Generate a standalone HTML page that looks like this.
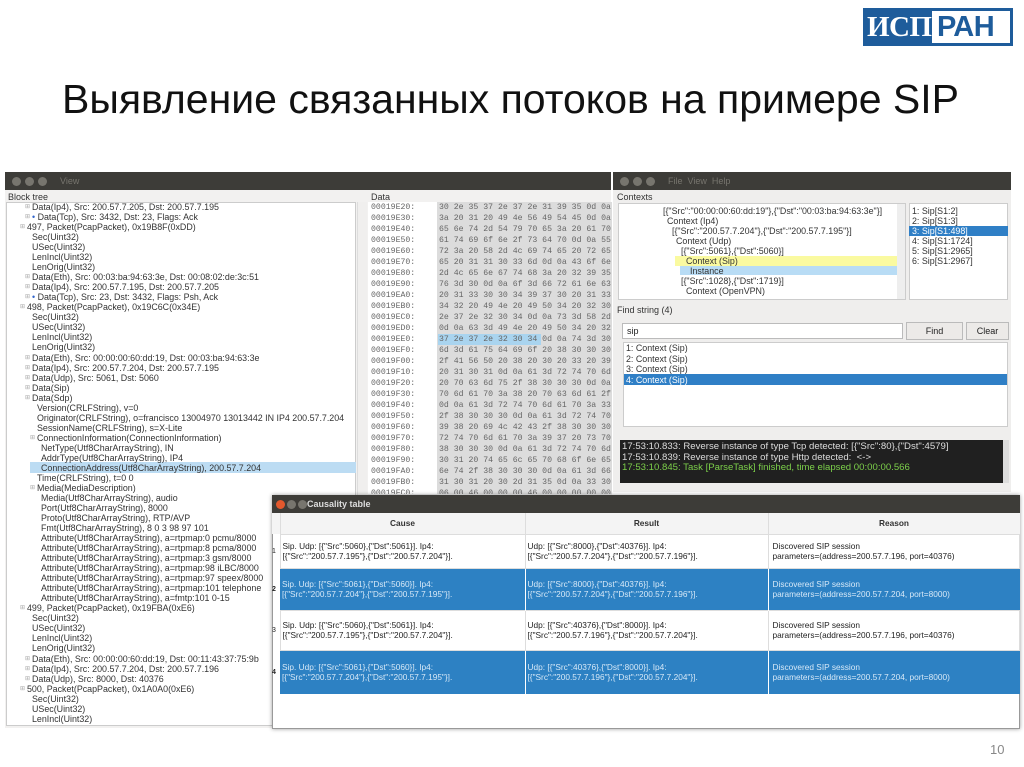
<!DOCTYPE html>
<html><head><meta charset="utf-8"><style>
*{margin:0;padding:0;box-sizing:border-box}
body{width:1024px;height:767px;background:#fff;position:relative;overflow:hidden;font-family:"Liberation Sans",sans-serif;color:#222}
.a{position:absolute}
.title{left:62px;top:76px;font-size:41px;color:#111;white-space:nowrap}
.tb{background:#3d3c38;color:#77756e;font-size:9px;line-height:18px}
.dot{position:absolute;top:5px;width:9px;height:9px;border-radius:50%;background:#77756e}
.tree div{position:absolute;font-size:8.9px;line-height:10px;white-space:nowrap;color:#333}
.hex div{position:absolute;font-family:"Liberation Mono",monospace;font-size:8.2px;line-height:11px;white-space:nowrap;color:#666}
.exp::before{content:"⊞";position:absolute;left:-7px;font-size:6px;color:#aaa}
.sm{font-size:8.9px;white-space:nowrap;color:#333}
table{border-collapse:collapse;font-size:8.3px}
</style></head><body>
<!-- logo -->
<div class="a" style="left:863px;top:8px;width:150px;height:38px;background:#1e5c9b"></div>
<div class="a" style="left:867px;top:10px;font-family:'Liberation Serif',serif;font-size:29px;color:#fff;font-weight:bold;line-height:34px;letter-spacing:-0.5px">ИСП</div>
<div class="a" style="left:932px;top:11px;width:78px;height:32px;background:#fff"></div>
<div class="a" style="left:937px;top:11px;font-size:29px;font-weight:bold;color:#1e5c9b;line-height:32px;letter-spacing:-0.5px">РАН</div>

<div class="a title">Выявление связанных потоков на примере SIP</div>

<!-- left window -->
<div class="a tb" style="left:5px;top:172px;width:606px;height:18px;padding-left:55px">View
<span class="dot" style="left:7px"></span><span class="dot" style="left:20px"></span><span class="dot" style="left:33px"></span></div>
<div class="a" style="left:5px;top:190px;width:606px;height:538px;background:#f2f1f0"></div>
<div class="a sm" style="left:8px;top:192px;font-size:9px">Block tree</div>
<div class="a" style="left:6px;top:202px;width:350px;height:524px;background:#fff;border:1px solid #ccc"></div>
<div class="a" style="left:357px;top:202px;width:10px;height:524px;background:#f0efee;border-left:1px solid #ddd"></div>
<div class="a" style="left:30px;top:462px;width:326px;height:11px;background:#bcdcf3"></div>
<div class="a tree" style="left:0;top:202px">
<div class="exp" style="left:32px;top:0">Data(Ip4), Src: 200.57.7.205, Dst: 200.57.7.195</div>
<div class="exp" style="left:32px;top:10px"><span style="color:#36c">•</span> Data(Tcp), Src: 3432, Dst: 23, Flags: Ack</div>
<div class="exp" style="left:27px;top:20px">497, Packet(PcapPacket), 0x19B8F(0xDD)</div>
<div style="left:32px;top:30px">Sec(Uint32)</div>
<div style="left:32px;top:40px">USec(Uint32)</div>
<div style="left:32px;top:50px">LenIncl(Uint32)</div>
<div style="left:32px;top:60px">LenOrig(Uint32)</div>
<div class="exp" style="left:32px;top:70px">Data(Eth), Src: 00:03:ba:94:63:3e, Dst: 00:08:02:de:3c:51</div>
<div class="exp" style="left:32px;top:80px">Data(Ip4), Src: 200.57.7.195, Dst: 200.57.7.205</div>
<div class="exp" style="left:32px;top:90px"><span style="color:#36c">•</span> Data(Tcp), Src: 23, Dst: 3432, Flags: Psh, Ack</div>
<div class="exp" style="left:27px;top:100px">498, Packet(PcapPacket), 0x19C6C(0x34E)</div>
<div style="left:32px;top:110px">Sec(Uint32)</div>
<div style="left:32px;top:120px">USec(Uint32)</div>
<div style="left:32px;top:130px">LenIncl(Uint32)</div>
<div style="left:32px;top:140px">LenOrig(Uint32)</div>
<div class="exp" style="left:32px;top:151px">Data(Eth), Src: 00:00:00:60:dd:19, Dst: 00:03:ba:94:63:3e</div>
<div class="exp" style="left:32px;top:161px">Data(Ip4), Src: 200.57.7.204, Dst: 200.57.7.195</div>
<div class="exp" style="left:32px;top:171px">Data(Udp), Src: 5061, Dst: 5060</div>
<div class="exp" style="left:32px;top:181px">Data(Sip)</div>
<div class="exp" style="left:32px;top:191px">Data(Sdp)</div>
<div style="left:37px;top:201px">Version(CRLFString), v=0</div>
<div style="left:37px;top:211px">Originator(CRLFString), o=francisco 13004970 13013442 IN IP4 200.57.7.204</div>
<div style="left:37px;top:221px">SessionName(CRLFString), s=X-Lite</div>
<div class="exp" style="left:37px;top:231px">ConnectionInformation(ConnectionInformation)</div>
<div style="left:41px;top:241px">NetType(Utf8CharArrayString), IN</div>
<div style="left:41px;top:251px">AddrType(Utf8CharArrayString), IP4</div>
<div style="left:41px;top:261px">ConnectionAddress(Utf8CharArrayString), 200.57.7.204</div>
<div style="left:37px;top:271px">Time(CRLFString), t=0 0</div>
<div class="exp" style="left:37px;top:281px">Media(MediaDescription)</div>
<div style="left:41px;top:291px">Media(Utf8CharArrayString), audio</div>
<div style="left:41px;top:301px">Port(Utf8CharArrayString), 8000</div>
<div style="left:41px;top:311px">Proto(Utf8CharArrayString), RTP/AVP</div>
<div style="left:41px;top:321px">Fmt(Utf8CharArrayString), 8 0 3 98 97 101</div>
<div style="left:41px;top:331px">Attribute(Utf8CharArrayString), a=rtpmap:0 pcmu/8000</div>
<div style="left:41px;top:341px">Attribute(Utf8CharArrayString), a=rtpmap:8 pcma/8000</div>
<div style="left:41px;top:351px">Attribute(Utf8CharArrayString), a=rtpmap:3 gsm/8000</div>
<div style="left:41px;top:361px">Attribute(Utf8CharArrayString), a=rtpmap:98 iLBC/8000</div>
<div style="left:41px;top:371px">Attribute(Utf8CharArrayString), a=rtpmap:97 speex/8000</div>
<div style="left:41px;top:381px">Attribute(Utf8CharArrayString), a=rtpmap:101 telephone</div>
<div style="left:41px;top:391px">Attribute(Utf8CharArrayString), a=fmtp:101 0-15</div>
<div class="exp" style="left:27px;top:401px">499, Packet(PcapPacket), 0x19FBA(0xE6)</div>
<div style="left:32px;top:411px">Sec(Uint32)</div>
<div style="left:32px;top:421px">USec(Uint32)</div>
<div style="left:32px;top:431px">LenIncl(Uint32)</div>
<div style="left:32px;top:441px">LenOrig(Uint32)</div>
<div class="exp" style="left:32px;top:452px">Data(Eth), Src: 00:00:00:60:dd:19, Dst: 00:11:43:37:75:9b</div>
<div class="exp" style="left:32px;top:462px">Data(Ip4), Src: 200.57.7.204, Dst: 200.57.7.196</div>
<div class="exp" style="left:32px;top:472px">Data(Udp), Src: 8000, Dst: 40376</div>
<div class="exp" style="left:27px;top:482px">500, Packet(PcapPacket), 0x1A0A0(0xE6)</div>
<div style="left:32px;top:492px">Sec(Uint32)</div>
<div style="left:32px;top:502px">USec(Uint32)</div>
<div style="left:32px;top:512px">LenIncl(Uint32)</div>
</div>

<!-- data panel -->
<div class="a sm" style="left:371px;top:192px;font-size:9px">Data</div>
<div class="a" style="left:368px;top:202px;width:244px;height:294px;background:#fff;overflow:hidden"></div>
<div class="a" style="left:437px;top:202px;width:175px;height:292px;background:#dcdcdc"></div>
<div class="a" style="left:438px;top:334px;width:103px;height:11px;background:#a9d4ef"></div>
<div class="a" style="left:368px;top:494px;width:244px;height:8px;background:#eee"></div>
<div class="a" style="left:368px;top:202px;width:244px;height:292px;overflow:hidden">
<div class="a hex" style="left:-368px;top:0">
<div style="left:371px;top:0">00019E20:</div><div style="left:439px;top:0">30 2e 35 37 2e 37 2e 31 39 35 0d 0a</div>
<div style="left:371px;top:11px">00019E30:</div><div style="left:439px;top:11px">3a 20 31 20 49 4e 56 49 54 45 0d 0a</div>
<div style="left:371px;top:22px">00019E40:</div><div style="left:439px;top:22px">65 6e 74 2d 54 79 70 65 3a 20 61 70</div>
<div style="left:371px;top:33px">00019E50:</div><div style="left:439px;top:33px">61 74 69 6f 6e 2f 73 64 70 0d 0a 55</div>
<div style="left:371px;top:44px">00019E60:</div><div style="left:439px;top:44px">72 3a 20 58 2d 4c 69 74 65 20 72 65</div>
<div style="left:371px;top:55px">00019E70:</div><div style="left:439px;top:55px">65 20 31 31 30 33 6d 0d 0a 43 6f 6e</div>
<div style="left:371px;top:66px">00019E80:</div><div style="left:439px;top:66px">2d 4c 65 6e 67 74 68 3a 20 32 39 35</div>
<div style="left:371px;top:77px">00019E90:</div><div style="left:439px;top:77px">76 3d 30 0d 0a 6f 3d 66 72 61 6e 63</div>
<div style="left:371px;top:88px">00019EA0:</div><div style="left:439px;top:88px">20 31 33 30 30 34 39 37 30 20 31 33</div>
<div style="left:371px;top:99px">00019EB0:</div><div style="left:439px;top:99px">34 32 20 49 4e 20 49 50 34 20 32 30</div>
<div style="left:371px;top:110px">00019EC0:</div><div style="left:439px;top:110px">2e 37 2e 32 30 34 0d 0a 73 3d 58 2d</div>
<div style="left:371px;top:121px">00019ED0:</div><div style="left:439px;top:121px">0d 0a 63 3d 49 4e 20 49 50 34 20 32</div>
<div style="left:371px;top:132px">00019EE0:</div><div style="left:439px;top:132px">37 2e 37 2e 32 30 34 0d 0a 74 3d 30</div>
<div style="left:371px;top:143px">00019EF0:</div><div style="left:439px;top:143px">6d 3d 61 75 64 69 6f 20 38 30 30 30</div>
<div style="left:371px;top:154px">00019F00:</div><div style="left:439px;top:154px">2f 41 56 50 20 38 20 30 20 33 20 39</div>
<div style="left:371px;top:165px">00019F10:</div><div style="left:439px;top:165px">20 31 30 31 0d 0a 61 3d 72 74 70 6d</div>
<div style="left:371px;top:176px">00019F20:</div><div style="left:439px;top:176px">20 70 63 6d 75 2f 38 30 30 30 0d 0a</div>
<div style="left:371px;top:187px">00019F30:</div><div style="left:439px;top:187px">70 6d 61 70 3a 38 20 70 63 6d 61 2f</div>
<div style="left:371px;top:198px">00019F40:</div><div style="left:439px;top:198px">0d 0a 61 3d 72 74 70 6d 61 70 3a 33</div>
<div style="left:371px;top:209px">00019F50:</div><div style="left:439px;top:209px">2f 38 30 30 30 0d 0a 61 3d 72 74 70</div>
<div style="left:371px;top:220px">00019F60:</div><div style="left:439px;top:220px">39 38 20 69 4c 42 43 2f 38 30 30 30</div>
<div style="left:371px;top:231px">00019F70:</div><div style="left:439px;top:231px">72 74 70 6d 61 70 3a 39 37 20 73 70</div>
<div style="left:371px;top:242px">00019F80:</div><div style="left:439px;top:242px">38 30 30 30 0d 0a 61 3d 72 74 70 6d</div>
<div style="left:371px;top:253px">00019F90:</div><div style="left:439px;top:253px">30 31 20 74 65 6c 65 70 68 6f 6e 65</div>
<div style="left:371px;top:264px">00019FA0:</div><div style="left:439px;top:264px">6e 74 2f 38 30 30 30 0d 0a 61 3d 66</div>
<div style="left:371px;top:275px">00019FB0:</div><div style="left:439px;top:275px">31 30 31 20 30 2d 31 35 0d 0a 33 30</div>
<div style="left:371px;top:286px">00019FC0:</div><div style="left:439px;top:286px">06 00 46 00 00 00 46 00 00 00 00 00</div>
</div></div>

<!-- right window -->
<div class="a tb" style="left:613px;top:172px;width:398px;height:18px;padding-left:55px">File &nbsp;View &nbsp;Help
<span class="dot" style="left:7px"></span><span class="dot" style="left:20px"></span><span class="dot" style="left:33px"></span></div>
<div class="a" style="left:613px;top:190px;width:398px;height:302px;background:#efeeed"></div>
<div class="a sm" style="left:617px;top:192px;font-size:9px">Contexts</div>
<div class="a" style="left:618px;top:203px;width:288px;height:97px;background:#fff;border:1px solid #ccc"></div>
<div class="a" style="left:897px;top:204px;width:8px;height:95px;background:#eee"></div>
<div class="a" style="left:909px;top:203px;width:99px;height:97px;background:#fff;border:1px solid #ccc"></div>
<div class="a" style="left:909px;top:226px;width:99px;height:10px;background:#2f7fc6"></div>
<div class="a" style="left:675px;top:256px;width:222px;height:10px;background:#fafaa0"></div>
<div class="a" style="left:680px;top:266px;width:217px;height:9px;background:#b8dcf5"></div>
<div class="a sm" style="left:0;top:0;line-height:10px">
<div class="a" style="left:663px;top:206px">[{"Src":"00:00:00:60:dd:19"},{"Dst":"00:03:ba:94:63:3e"}]</div>
<div class="a" style="left:667px;top:216px">Context (Ip4)</div>
<div class="a" style="left:672px;top:226px">[{"Src":"200.57.7.204"},{"Dst":"200.57.7.195"}]</div>
<div class="a" style="left:676px;top:236px">Context (Udp)</div>
<div class="a" style="left:681px;top:246px">[{"Src":5061},{"Dst":5060}]</div>
<div class="a" style="left:686px;top:256px">Context (Sip)</div>
<div class="a" style="left:690px;top:266px">Instance</div>
<div class="a" style="left:681px;top:276px">[{"Src":1028},{"Dst":1719}]</div>
<div class="a" style="left:686px;top:286px">Context (OpenVPN)</div>
<div class="a" style="left:912px;top:206px">1: Sip[S1:2]</div>
<div class="a" style="left:912px;top:216px">2: Sip[S1:3]</div>
<div class="a" style="left:912px;top:226px;color:#fff">3: Sip[S1:498]</div>
<div class="a" style="left:912px;top:236px">4: Sip[S1:1724]</div>
<div class="a" style="left:912px;top:246px">5: Sip[S1:2965]</div>
<div class="a" style="left:912px;top:256px">6: Sip[S1:2967]</div>
</div>
<div class="a sm" style="left:617px;top:305px;font-size:9px">Find string (4)</div>
<div class="a" style="left:622px;top:323px;width:281px;height:16px;background:#fff;border:1px solid #bbb;font-size:9px;padding:2px 4px">sip</div>
<div class="a" style="left:906px;top:322px;width:57px;height:18px;background:#eceae8;border:1px solid #bbb;font-size:9px;text-align:center;line-height:16px">Find</div>
<div class="a" style="left:966px;top:322px;width:43px;height:18px;background:#eceae8;border:1px solid #bbb;font-size:9px;text-align:center;line-height:16px">Clear</div>
<div class="a" style="left:623px;top:342px;width:385px;height:85px;background:#fff;border:1px solid #ccc"></div>
<div class="a" style="left:624px;top:374px;width:383px;height:11px;background:#2f7fc6"></div>
<div class="a sm" style="left:626px;top:343px;line-height:10.5px">1: Context (Sip)<br>2: Context (Sip)<br>3: Context (Sip)<br><span style="color:#fff">4: Context (Sip)</span></div>
<div class="a" style="left:620px;top:440px;width:383px;height:43px;background:#202020;font-size:9.6px;line-height:10.5px;padding:2px 2px;white-space:nowrap;overflow:hidden;color:#ddd">17:53:10.833: Reverse instance of type Tcp detected: [{"Src":80},{"Dst":4579]<br>17:53:10.839: Reverse instance of type Http detected: &nbsp;&lt;-&gt;<br><span style="color:#7ccf4a">17:53:10.845: Task [ParseTask] finished, time elapsed 00:00:00.566</span></div>
<div class="a" style="left:1003px;top:440px;width:6px;height:43px;background:#ddd"></div>

<!-- causality window -->
<div class="a" style="left:272px;top:495px;width:748px;height:234px;background:#fff;border:1px solid #999;box-shadow:0 0 4px rgba(0,0,0,.4)"></div>
<div class="a tb" style="left:272px;top:495px;width:748px;height:18px;padding-left:35px;color:#ddd;font-weight:bold">Causality table
<span class="dot" style="left:4px;background:#e2582d"></span><span class="dot" style="left:15px"></span><span class="dot" style="left:26px"></span></div>
<table class="a" style="left:272px;top:513px;width:748px">
<tr style="height:21px;background:#f4f4f4;font-weight:bold;color:#333"><td style="width:8px;border-right:1px solid #ddd"></td><td style="width:245px;text-align:center;border-right:1px solid #ddd;border-bottom:1px solid #ddd">Cause</td><td style="width:243px;text-align:center;border-right:1px solid #ddd;border-bottom:1px solid #ddd">Result</td><td style="text-align:center;border-bottom:1px solid #ddd">Reason</td></tr>
<tr style="height:34px"><td style="font-size:7px">1</td><td style="border:1px solid #ddd;padding-left:2px">Sip. Udp: [{"Src":5060},{"Dst":5061}]. Ip4:<br>[{"Src":"200.57.7.195"},{"Dst":"200.57.7.204"}].</td><td style="border:1px solid #ddd;padding-left:2px">Udp: [{"Src":8000},{"Dst":40376}]. Ip4:<br>[{"Src":"200.57.7.204"},{"Dst":"200.57.7.196"}].</td><td style="border:1px solid #ddd;padding-left:4px">Discovered SIP session<br>parameters=(address=200.57.7.196, port=40376)</td></tr>
<tr style="height:42px;color:#d6e8f7"><td style="font-size:7px;color:#222;font-weight:bold">2</td><td style="background:#2d81c3;padding-left:2px">Sip. Udp: [{"Src":5061},{"Dst":5060}]. Ip4:<br>[{"Src":"200.57.7.204"},{"Dst":"200.57.7.195"}].</td><td style="background:#2d81c3;padding-left:2px;border-left:1px solid #fff">Udp: [{"Src":8000},{"Dst":40376}]. Ip4:<br>[{"Src":"200.57.7.204"},{"Dst":"200.57.7.196"}].</td><td style="background:#2d81c3;padding-left:4px;border-left:1px solid #fff">Discovered SIP session<br>parameters=(address=200.57.7.204, port=8000)</td></tr>
<tr style="height:40px"><td style="font-size:7px">3</td><td style="border:1px solid #ddd;padding-left:2px">Sip. Udp: [{"Src":5060},{"Dst":5061}]. Ip4:<br>[{"Src":"200.57.7.195"},{"Dst":"200.57.7.204"}].</td><td style="border:1px solid #ddd;padding-left:2px">Udp: [{"Src":40376},{"Dst":8000}]. Ip4:<br>[{"Src":"200.57.7.196"},{"Dst":"200.57.7.204"}].</td><td style="border:1px solid #ddd;padding-left:4px">Discovered SIP session<br>parameters=(address=200.57.7.196, port=40376)</td></tr>
<tr style="height:44px;color:#d6e8f7"><td style="font-size:7px;color:#222;font-weight:bold">4</td><td style="background:#2d81c3;padding-left:2px">Sip. Udp: [{"Src":5061},{"Dst":5060}]. Ip4:<br>[{"Src":"200.57.7.204"},{"Dst":"200.57.7.195"}].</td><td style="background:#2d81c3;padding-left:2px;border-left:1px solid #fff">Udp: [{"Src":40376},{"Dst":8000}]. Ip4:<br>[{"Src":"200.57.7.196"},{"Dst":"200.57.7.204"}].</td><td style="background:#2d81c3;padding-left:4px;border-left:1px solid #fff">Discovered SIP session<br>parameters=(address=200.57.7.204, port=8000)</td></tr>
</table>

<div class="a" style="left:990px;top:742px;font-size:13px;color:#888">10</div>
</body></html>
